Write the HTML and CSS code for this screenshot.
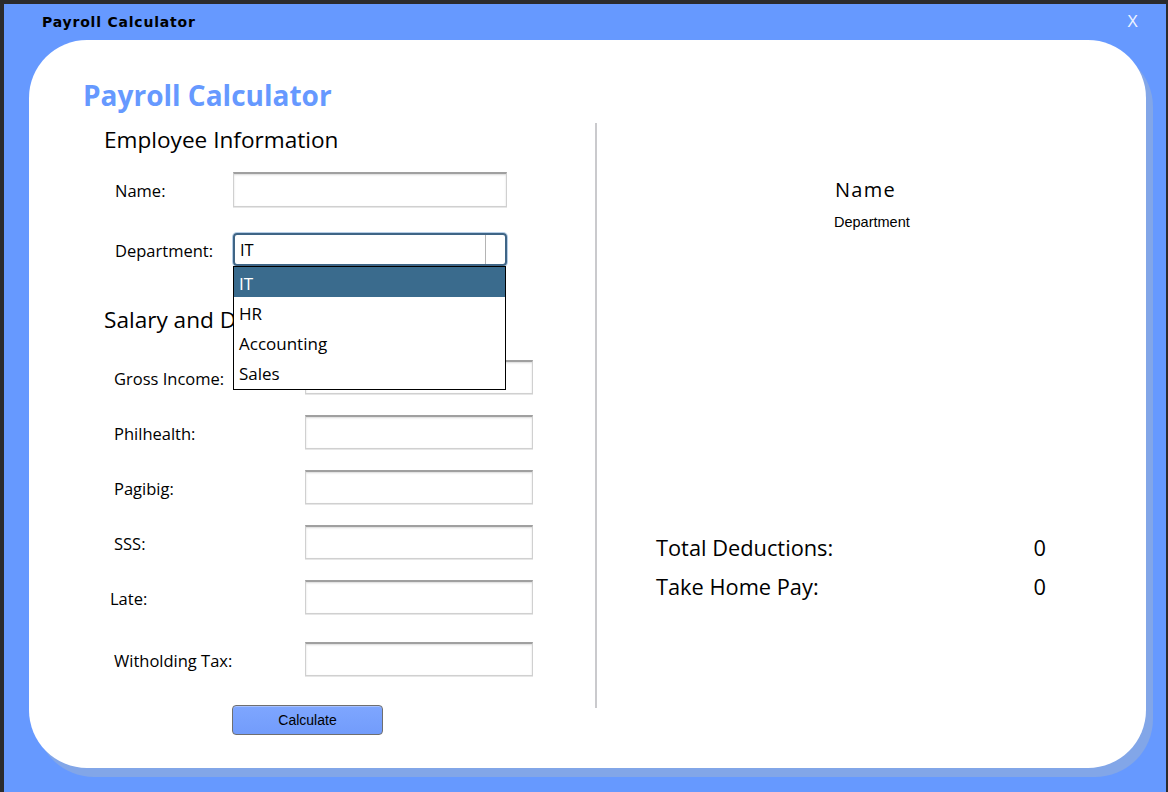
FILE: index.html
```html
<!DOCTYPE html>
<html>
<head>
<meta charset="utf-8">
<link rel="stylesheet" href="styles.css">
</head>
<body>
<div class="window">
  <div class="titlebar">
    <span class="title">Payroll Calculator</span>
    <span class="close">X</span>
  </div>
  <div class="card">
    <h1 class="heading">Payroll Calculator</h1>
    <div class="content">
      <div class="left">
        <h2 class="section">Employee Information</h2>
        <div class="row row-emp row-name">
          <label class="lbl lbl-emp">Name:</label>
          <div class="field field-emp"></div>
        </div>
        <div class="row row-emp row-dept">
          <label class="lbl lbl-emp">Department:</label>
          <div class="combo">
            <span class="combo-text">IT</span>
            <span class="combo-btn"></span>
            <ul class="list">
              <li class="opt opt-sel">IT</li>
              <li class="opt">HR</li>
              <li class="opt">Accounting</li>
              <li class="opt">Sales</li>
            </ul>
          </div>
        </div>
        <h2 class="section section-sal">Salary and Deductions</h2>
        <div class="row row-sal row-first">
          <label class="lbl lbl-sal">Gross Income:</label>
          <div class="field field-sal"></div>
        </div>
        <div class="row row-sal">
          <label class="lbl lbl-sal">Philhealth:</label>
          <div class="field field-sal"></div>
        </div>
        <div class="row row-sal">
          <label class="lbl lbl-sal">Pagibig:</label>
          <div class="field field-sal"></div>
        </div>
        <div class="row row-sal">
          <label class="lbl lbl-sal">SSS:</label>
          <div class="field field-sal"></div>
        </div>
        <div class="row row-sal row-late">
          <label class="lbl lbl-sal lbl-late">Late:</label>
          <div class="field field-sal"></div>
        </div>
        <div class="row row-sal row-tax">
          <label class="lbl lbl-sal lbl-tax">Witholding Tax:</label>
          <div class="field field-sal"></div>
        </div>
        <button class="calc">Calculate</button>
      </div>
      <div class="divider"></div>
      <div class="right">
        <div class="emp-name">Name</div>
        <div class="emp-dept">Department</div>
        <div class="totals">
          <div class="total-row"><span>Total Deductions:</span><span>0</span></div>
          <div class="total-row"><span>Take Home Pay:</span><span>0</span></div>
        </div>
      </div>
    </div>
  </div>
</div>
</body>
</html>
```

FILE: styles.css
```css
* { box-sizing: border-box; }
html, body { margin: 0; padding: 0; }
body {
  width: 1168px;
  height: 792px;
  background: #2b2b2d;
  overflow: hidden;
  padding: 4px 2px 0 4px;
  font-family: "Open Sans", "Noto Sans", sans-serif;
}
.window {
  width: 1162px;
  height: 788px;
  background: #6699ff;
}
.titlebar {
  height: 36px;
  display: flex;
  align-items: center;
  justify-content: space-between;
  padding: 0 28px 0 38px;
}
.title {
  font-family: "DejaVu Sans", sans-serif;
  font-weight: bold;
  font-size: 14px;
  letter-spacing: 0.8px;
  color: #000;
}
.close {
  font-family: "Liberation Sans", sans-serif;
  font-size: 16px;
  color: #eef3ff;
}
.card {
  margin-left: 25px;
  width: 1117px;
  height: 728px;
  background: #fff;
  border-radius: 58px;
  box-shadow: 7px 9px 0 0 #82a6e8;
  padding: 36px 0 0 54px;
}
.heading {
  margin: 0;
  font-size: 28px;
  line-height: 38px;
  font-weight: 700;
  color: #6699ff;
}
.content {
  display: flex;
}
.left {
  width: 512px;
  display: flex;
  flex-direction: column;
  align-items: flex-start;
}
.section {
  margin: 11px 0 0 21px;
  font-size: 22.6px;
  line-height: 30px;
  font-weight: 400;
  color: #000;
  white-space: nowrap;
}
.section-sal { margin-top: 39px; }
.row {
  display: flex;
  align-items: center;
}
.row-emp { padding-left: 32px; }
.row-name { margin-top: 17px; }
.row-dept { margin-top: 26px; }
.row-sal { padding-left: 31px; margin-top: 21px; }
.row-first { margin-top: 25px; }
.row-late { padding-left: 27px; }
.row-tax { margin-top: 28px; }
.lbl {
  font-size: 16.5px;
  color: #000;
  white-space: nowrap;
}
.lbl-emp { width: 118px; padding-top: 2px; }
.lbl-sal { width: 191px; padding-top: 2px; }
.lbl-late { width: 195px; }
.lbl-tax { padding-top: 2px; }
.field {
  background: #fff;
  border: 1px solid #d0d0d0;
  border-top: 2px solid #a0a0a0;
  box-shadow: inset 0 1px 2px rgba(0,0,0,0.15), 0 1px 0 #e6e6e6;
}
.field-emp { width: 274px; height: 35px; }
.field-sal { width: 228px; height: 34px; }
.combo {
  position: relative;
  width: 274px;
  height: 33px;
  border: 2px solid #3f6586;
  border-radius: 4px;
  box-shadow: 0 0 0 1px #b5cde6;
  display: flex;
  align-items: center;
}
.combo-text {
  flex: 1;
  padding-left: 5px;
  font-size: 16.5px;
}
.combo-btn {
  width: 20px;
  height: 29px;
  border-left: 1px solid #b4b4b4;
}
.list {
  position: absolute;
  left: -2px;
  top: 31px;
  width: 273px;
  height: 124px;
  margin: 0;
  padding: 0;
  list-style: none;
  background: #fff;
  border: 1px solid #000;
  z-index: 5;
}
.opt {
  height: 30px;
  line-height: 30px;
  padding: 2px 0 0 5px;
  font-size: 17px;
  color: #000;
}
.opt-sel {
  background: #3a6b8d;
  color: #fff;
}
.calc {
  margin: 29px 0 0 149px;
  width: 151px;
  height: 30px;
  border: 1px solid #6f6f6f;
  border-radius: 4px;
  background: linear-gradient(#7ea6ff, #729cfb);
  box-shadow: inset 0 1px 0 #a7c1ff;
  font-family: "Liberation Sans", Arial, sans-serif;
  font-size: 14px;
  color: #000;
  padding: 0;
}
.divider {
  margin-top: 9px;
  width: 2px;
  height: 585px;
  background: #cacacd;
}
.right {
  flex: 1;
  display: flex;
  flex-direction: column;
}
.emp-name {
  margin: 63px 0 0 238px;
  font-size: 20px;
  line-height: 26px;
  letter-spacing: 1.3px;
  color: #000;
}
.emp-dept {
  margin: 10px 0 0 237px;
  font-family: "Liberation Sans", Arial, sans-serif;
  font-size: 14.5px;
  line-height: 18px;
  color: #000;
}
.totals {
  margin: 302px 0 0 59px;
  width: 390px;
  display: flex;
  flex-direction: column;
  gap: 9px;
}
.total-row {
  display: flex;
  justify-content: space-between;
  font-size: 21.8px;
  line-height: 30px;
  color: #000;
}
```
